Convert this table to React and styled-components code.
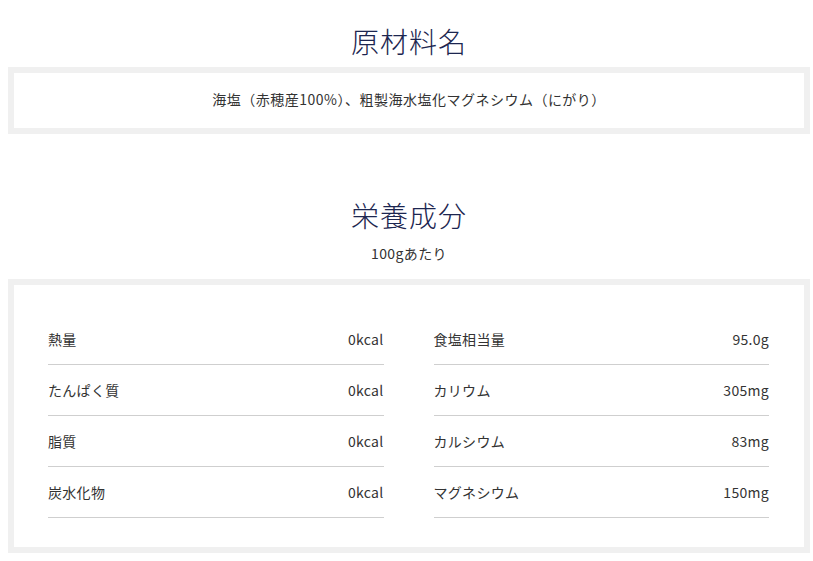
import React from "react";
import styled, { createGlobalStyle } from "styled-components";

const GlobalStyle = createGlobalStyle`
  body {
    margin: 0;
    background: #fff;
    font-family: "Noto Sans CJK JP", "Noto Sans", sans-serif;
    color: #333;
  }
`;

const Page = styled.div`
  width: 802px;
  margin-left: 8px;
  padding-top: 21px;
`;

const Title = styled.h2`
  margin: 0;
  font-size: 28px;
  line-height: 40px;
  font-weight: 300;
  color: #1c2650;
  text-align: center;
  letter-spacing: 1px;
`;

const Sub = styled.p`
  margin: 8px 0 16px;
  font-size: 14px;
  line-height: 20px;
  text-align: center;
  color: #333;
  letter-spacing: 0.4px;
`;

const Box = styled.div`
  border: 6px solid #f0f0f0;
  background: #fff;
  margin-top: ${(p) => p.$top || 0}px;
`;

const Materials = styled.p`
  margin: 0;
  padding: 18px 20px 20px;
  font-size: 14px;
  line-height: 17px;
  text-align: center;
  color: #333;
  letter-spacing: 0.5px;
`;

const Section = styled.section`
  margin-top: 61px;
`;

const Grid = styled.div`
  display: grid;
  grid-template-columns: 1fr 1fr;
  column-gap: 50px;
  padding: 29px 35px 29px 34px;
`;

const Col = styled.div`
  display: flex;
  flex-direction: column;
`;

const Row = styled.div`
  display: flex;
  justify-content: space-between;
  align-items: center;
  height: 51px;
  padding-bottom: 1px;
  box-sizing: border-box;
  border-bottom: 1px solid #cfcfcf;
  font-size: 14px;
  color: #333;
  letter-spacing: 0.3px;
`;

const left = [
  ["熱量", "0kcal"],
  ["たんぱく質", "0kcal"],
  ["脂質", "0kcal"],
  ["炭水化物", "0kcal"],
];

const right = [
  ["食塩相当量", "95.0g"],
  ["カリウム", "305mg"],
  ["カルシウム", "83mg"],
  ["マグネシウム", "150mg"],
];

const App = () => {
  return (
    <Page>
      <GlobalStyle />
      <Title>原材料名</Title>
      <Box $top={6}>
        <Materials>海塩（赤穂産100%）、粗製海水塩化マグネシウム（にがり）</Materials>
      </Box>
      <Section>
        <Title>栄養成分</Title>
        <Sub>100gあたり</Sub>
        <Box>
          <Grid>
            <Col>
              {left.map(([k, v]) => (
                <Row key={k}>
                  <span>{k}</span>
                  <span>{v}</span>
                </Row>
              ))}
            </Col>
            <Col>
              {right.map(([k, v]) => (
                <Row key={k}>
                  <span>{k}</span>
                  <span>{v}</span>
                </Row>
              ))}
            </Col>
          </Grid>
        </Box>
      </Section>
    </Page>
  );
};

export default App;
